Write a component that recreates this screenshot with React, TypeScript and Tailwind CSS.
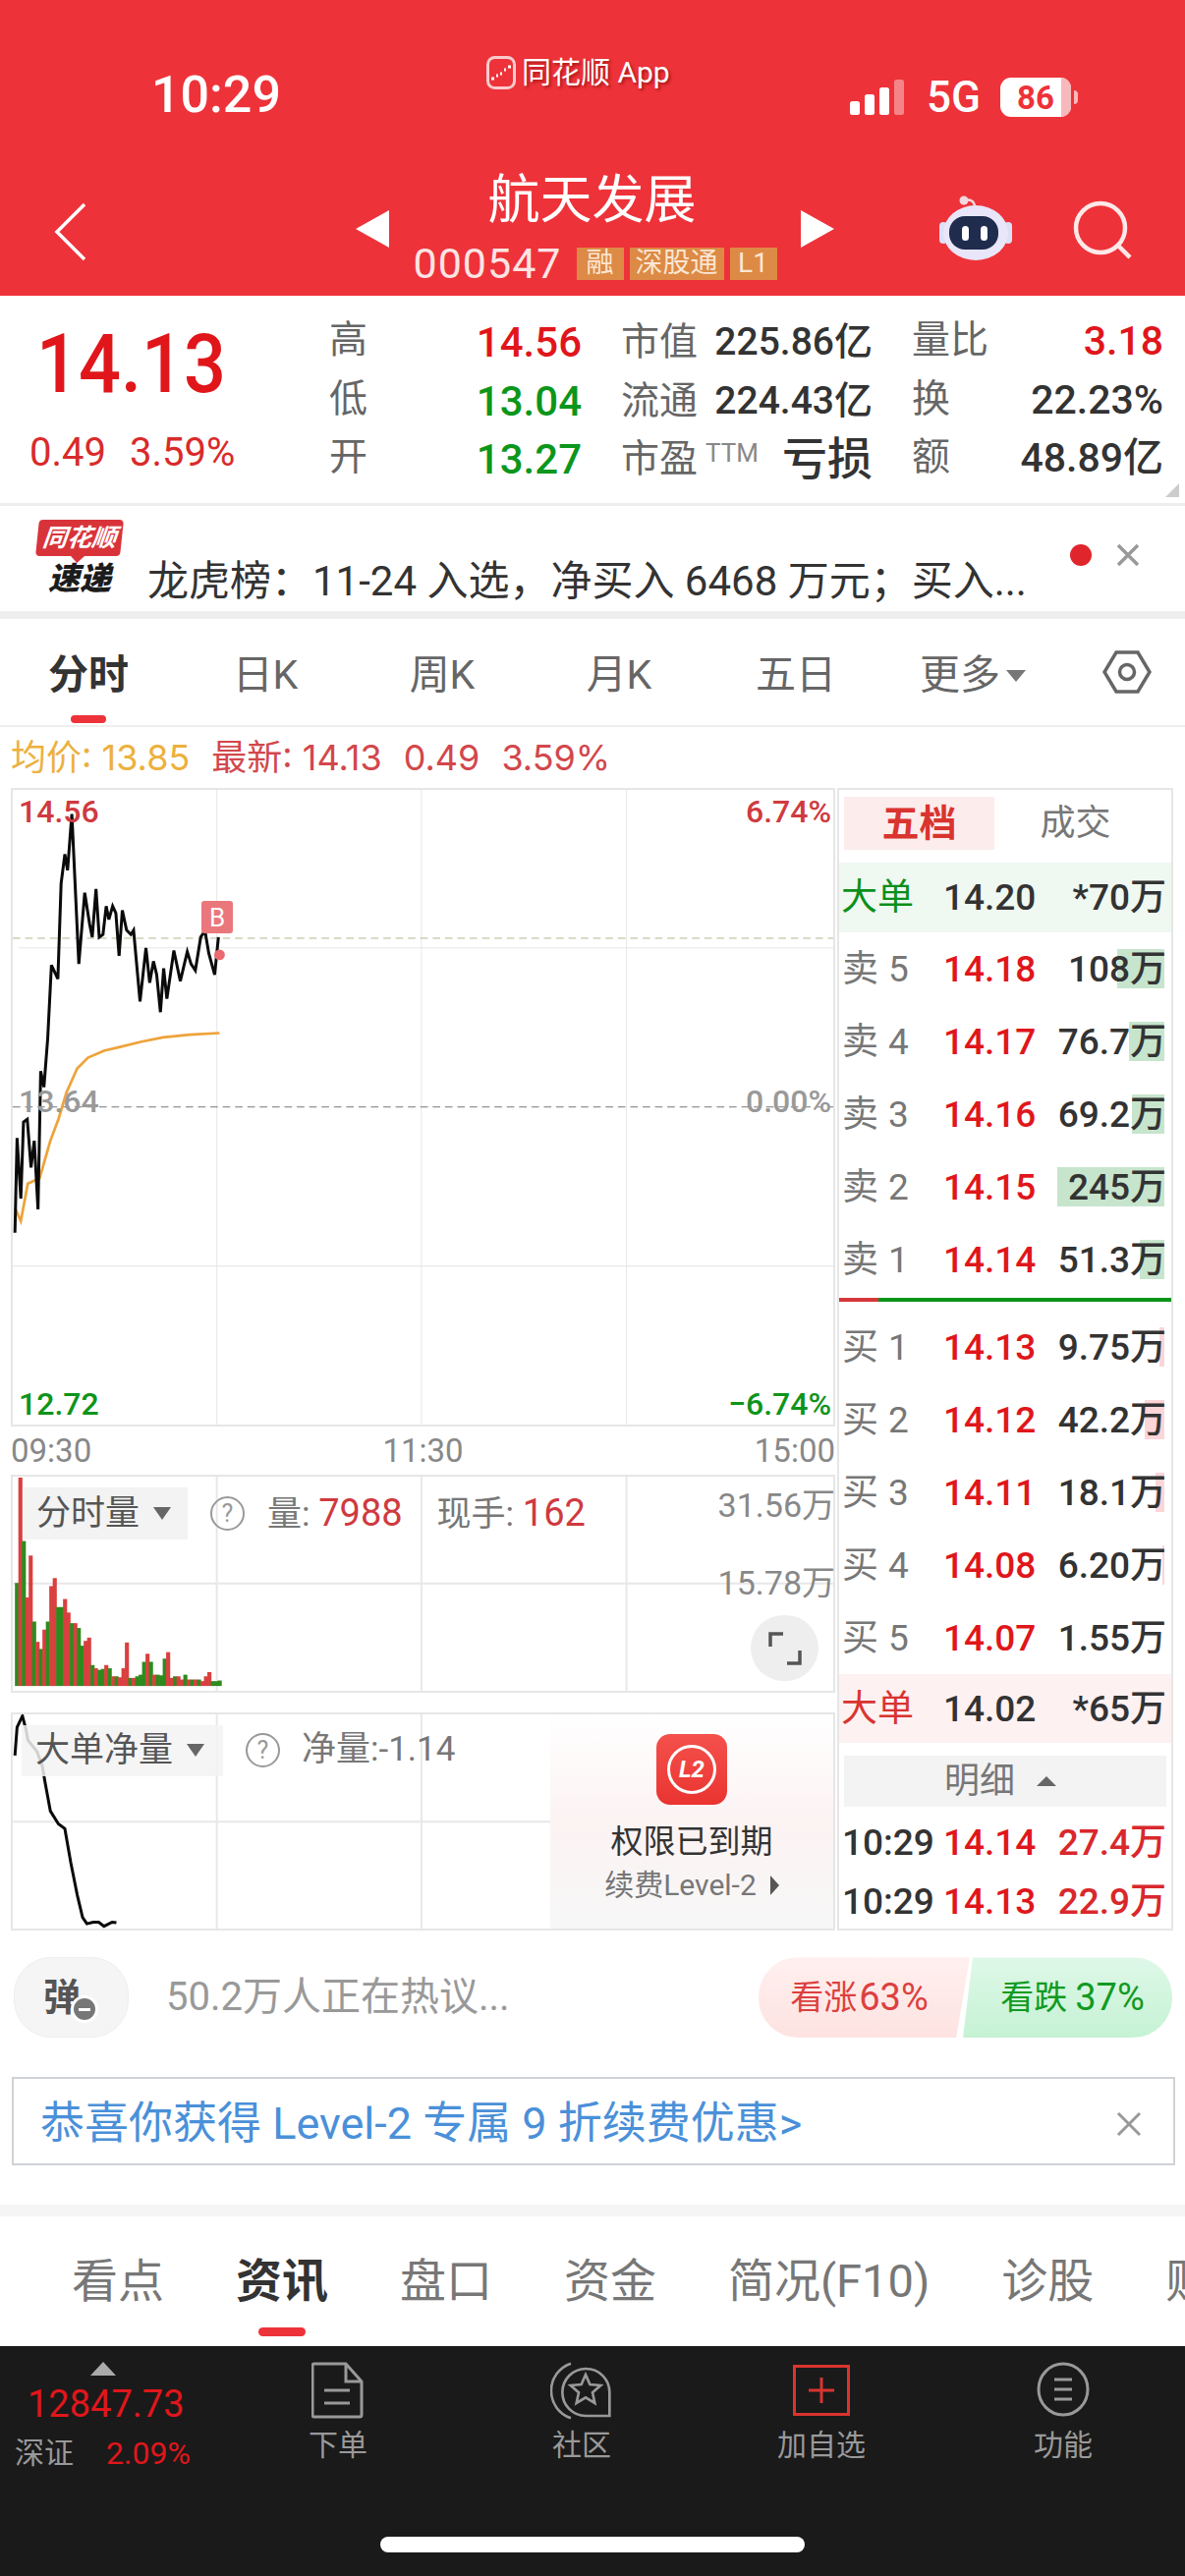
import React from "react";

const RED = "text-[#e0161b]";

// chart points are in a 1528x1185 space, the chart box scaled up
const pricePts =
  "24,1122 28,945 35,1058 40,915 47,910 54,1000 60,950 67,1078 72,820 78,850 85,760 92,622 104,648 110,470 117,415 122,445 130,340 143,620 154,487 163,545 168,570 175,480 181,570 188,565 194,512 199,537 206,512 212,525 218,605 224,520 232,557 240,565 245,557 257,690 268,590 275,655 282,615 288,640 295,710 301,628 307,685 320,595 332,652 345,597 352,620 360,632 370,570 378,558 385,600 396,640 403,570";
const avgPts =
  "24,1075 35,1100 48,1030 70,1020 90,950 105,910 120,860 140,815 160,795 190,782 220,775 260,765 300,757 350,752 405,749";
const netPts =
  "24,918 28,830 38,795 45,840 48,870 65,905 75,950 80,1000 90,1090 105,1130 117,1145 128,1250 140,1350 150,1420 158,1440 170,1435 180,1435 190,1448 205,1435 213,1437";

// [top of bar, 1 = red / 0 = green]
const volBars: [number, number][] = [
  [395, 0], [68, 1], [265, 0], [440, 1], [310, 1], [515, 0], [578, 1], [600, 0], [540, 1], [515, 0],
  [405, 1], [380, 1], [470, 0], [470, 0], [445, 1], [487, 1], [520, 0], [520, 1], [535, 0], [590, 0],
  [575, 1], [565, 1], [650, 0], [660, 1], [665, 0], [662, 0], [650, 1], [660, 0], [685, 1], [685, 0],
  [688, 1], [660, 1], [580, 1], [690, 0], [690, 1], [685, 0], [680, 0], [640, 0], [615, 1], [640, 0],
  [680, 1], [680, 0], [682, 0], [630, 0], [610, 1], [690, 1], [685, 0], [685, 1], [695, 1], [680, 0],
  [695, 1], [695, 0], [695, 1], [695, 0], [700, 1], [685, 1], [672, 1], [700, 0], [700, 0], [698, 0],
];

const quoteRows = [
  { label: "高", val: "14.56", color: RED, l2: "市值", v2: "225.86亿", l3: "量比", v3: "3.18", c3: RED },
  { label: "低", val: "13.04", color: "text-[#0b961c]", l2: "流通", v2: "224.43亿", l3: "换", v3: "22.23%", c3: "text-[#333]" },
];

const sellRows = [
  { label: "卖", n: 5, price: "14.18", vol: "108万", bar: 48 },
  { label: "卖", n: 4, price: "14.17", vol: "76.7万", bar: 36 },
  { label: "卖", n: 3, price: "14.16", vol: "69.2万", bar: 33 },
  { label: "卖", n: 2, price: "14.15", vol: "245万", bar: 109 },
  { label: "卖", n: 1, price: "14.14", vol: "51.3万", bar: 25 },
];
const buyRows = [
  { label: "买", n: 1, price: "14.13", vol: "9.75万", bar: 5 },
  { label: "买", n: 2, price: "14.12", vol: "42.2万", bar: 20 },
  { label: "买", n: 3, price: "14.11", vol: "18.1万", bar: 9 },
  { label: "买", n: 4, price: "14.08", vol: "6.20万", bar: 2 },
  { label: "买", n: 5, price: "14.07", vol: "1.55万", bar: 0 },
];

function StatusBar() {
  return (
    <div className="flex h-[190px] text-white">
      <div className="w-[495px] pl-[154px] pt-[66px] text-[52px] font-medium leading-[62px]">10:29</div>
      <div className="flex w-[370px] items-start gap-[6px] pt-[56px]">
        <svg width="30" height="34" viewBox="0 0 30 34" className="mt-[1px]">
          <rect x="1.5" y="1.5" width="27" height="31" rx="7" fill="#ee3239" stroke="#fff" strokeOpacity="0.75" strokeWidth="3" />
          <path d="M5 23h3M10 20h2M14 18h2M18 14h2M22 11h3" stroke="#fff" strokeWidth="3" />
        </svg>
        <span className="text-[30px] leading-[36px] [text-shadow:2px_2px_3px_rgba(110,0,0,0.55)]">同花顺 App</span>
      </div>
      <div className="mt-[79px] flex h-[40px] items-center">
        <svg width="60" height="36" viewBox="0 0 60 36">
          <rect x="0" y="22" width="10" height="14" rx="2.5" fill="#fff" />
          <rect x="15" y="15" width="10" height="21" rx="2.5" fill="#fff" />
          <rect x="30" y="8" width="10" height="28" rx="2.5" fill="#fff" />
          <rect x="45" y="0" width="10" height="36" rx="2.5" fill="#fff" fillOpacity="0.4" />
        </svg>
        <span className="ml-[18px] text-[44px] font-medium leading-none">5G</span>
        <div className="relative ml-[20px] flex h-[40px] w-[72px] items-center justify-center rounded-[11px] bg-white">
          <span className="text-[33px] font-bold leading-none text-[#ee3239]">86</span>
          <div className="absolute right-0 top-0 h-full w-[10px] rounded-r-[11px] bg-[#f8b9bc]" />
        </div>
        <div className="ml-[3px] h-[14px] w-[4px] rounded-r-full bg-[#f8b9bc]" />
      </div>
    </div>
  );
}

function NavBar() {
  return (
    <div className="flex h-[111px] items-start text-white">
      <div className="w-[362px] pl-[55px] pt-[16px]">
        <svg width="34" height="60" viewBox="0 0 34 60" fill="none" stroke="#fff" strokeWidth="3.5">
          <path d="M31 2 3 30l28 28" />
        </svg>
      </div>
      <div className="mt-[24px] h-0 w-0 border-y-[19px] border-r-[34px] border-y-transparent border-r-white" />
      <div className="flex w-[419px] flex-col items-center">
        <div className="-ml-[6px] -mt-[17px] text-[53px] leading-[62px]">航天发展</div>
        <div className="mt-[15px] flex h-[36px] items-center gap-[6px]">
          <span className="mr-[9px] text-[43px] leading-none tracking-[1px] text-[#fde4e4]">000547</span>
          <span className="flex h-[33px] w-[48px] items-center justify-center bg-[#dc8a45] text-[28px] text-[#fbe6d2]">融</span>
          <span className="flex h-[33px] w-[96px] items-center justify-center bg-[#dc8a45] text-[28px] text-[#fbe6d2]">深股通</span>
          <span className="flex h-[33px] w-[48px] items-center justify-center bg-[#dc8a45] text-[28px] text-[#fbe6d2]">L1</span>
        </div>
      </div>
      <div className="mt-[24px] h-0 w-0 border-y-[19px] border-l-[34px] border-y-transparent border-l-white" />
      <svg width="74" height="68" viewBox="0 0 74 68" className="ml-[107px] mt-[8px]">
        <path d="M26 6q9-2 10 6" stroke="#f3d7de" strokeWidth="2.5" fill="none" />
        <circle cx="25" cy="6" r="4.5" fill="#f3d7de" />
        <rect x="0" y="28" width="8" height="22" rx="4" fill="#dbe0f5" />
        <rect x="66" y="28" width="8" height="22" rx="4" fill="#dbe0f5" />
        <ellipse cx="37" cy="39" rx="33" ry="28" fill="#e8e6f8" />
        <rect x="10" y="22" width="50" height="34" rx="16" fill="#1f2c4d" />
        <rect x="23" y="32" width="7" height="15" rx="3.5" fill="#fff" />
        <rect x="42" y="32" width="7" height="15" rx="3.5" fill="#fff" />
      </svg>
      <svg width="60" height="60" viewBox="0 0 60 60" fill="none" stroke="#ffe8e8" strokeWidth="4.5" className="ml-[62px] mt-[14px]">
        <circle cx="28" cy="28" r="25" />
        <path d="m46 46 12 12" />
      </svg>
    </div>
  );
}

function QuotePanel() {
  return (
    <div className="relative flex h-[211px] bg-white">
      <div className="w-[335px] pl-[37px] pt-[24px]">
        <div className="origin-left scale-x-[0.9] whitespace-nowrap text-[84px] font-medium leading-[92px] text-[#e0161b]">14.13</div>
        <div className="-ml-[7px] mt-[20px] flex gap-[24px] text-[40px] leading-[48px] text-[#d92a2a]">
          <span>0.49</span>
          <span>3.59%</span>
        </div>
      </div>
      <div className="flex flex-col pt-[17px]">
        {quoteRows.map((r) => (
          <div key={r.label} className="flex h-[60px] items-center gap-[40px] text-[39px] text-[#666]">
            <div className="flex w-[257px] justify-between">
              <span>{r.label}</span>
              <span className={`text-[42px] font-medium ${r.color}`}>{r.val}</span>
            </div>
            <div className="flex w-[256px] justify-between">
              <span>{r.l2}</span>
              <span className="font-medium text-[#333]">{r.v2}</span>
            </div>
            <div className="flex w-[256px] justify-between">
              <span>{r.l3}</span>
              <span className={`text-[41px] font-medium ${r.c3}`}>{r.v3}</span>
            </div>
          </div>
        ))}
        <div className="flex h-[58px] items-center gap-[40px] text-[39px] text-[#666]">
          <div className="flex w-[257px] justify-between">
            <span>开</span>
            <span className="text-[42px] font-medium text-[#0b961c]">13.27</span>
          </div>
          <div className="flex w-[256px] items-center justify-between">
            <span>
              市盈<span className="ml-[8px] align-[10px] text-[26px] text-[#888]">TTM</span>
            </span>
            <span className="text-[46px] font-medium text-[#333]">亏损</span>
          </div>
          <div className="flex w-[256px] justify-between">
            <span>额</span>
            <span className="text-[41px] font-medium text-[#333]">48.89亿</span>
          </div>
        </div>
      </div>
      <div className="absolute bottom-[6px] right-[6px] h-0 w-0 border-b-[14px] border-l-[14px] border-b-[#ccc] border-l-transparent" />
    </div>
  );
}

function NewsTicker() {
  return (
    <div className="flex h-[118px] items-start border-y-[3px] border-b-[8px] border-y-[#eeeeee] bg-white">
      <div className="ml-[37px] mt-[14px] flex w-[88px] flex-col items-center">
        <div className="relative flex h-[37px] w-[86px] -skew-x-6 items-center justify-center rounded-[4px] bg-[#d9333a] text-[25px] font-bold italic leading-none text-white">
          同花顺
          <div className="absolute -bottom-[7px] h-0 w-0 border-x-[7px] border-t-[7px] border-x-transparent border-t-[#d9333a]" />
        </div>
        <div className="mt-[4px] text-[32px] font-black italic leading-[38px] text-[#1c1c1c]">速递</div>
      </div>
      <div className="ml-[25px] mt-[52px] w-[900px] whitespace-nowrap text-[42px] leading-[50px] text-[#333]">
        龙虎榜：11-24 入选，净买入 6468 万元；买入...
      </div>
      <div className="ml-[39px] mt-[39px] h-[22px] w-[22px] rounded-full bg-[#e0252c]" />
      <svg width="26" height="26" viewBox="0 0 26 26" className="ml-[24px] mt-[37px]" stroke="#999" strokeWidth="3.5">
        <path d="m3 3 20 20M23 3 3 23" />
      </svg>
    </div>
  );
}

function ChartTabs() {
  const tabs = ["日K", "周K", "月K", "五日"];
  return (
    <div className="flex h-[110px] items-center border-b-2 border-[#eeeeee] bg-white pt-[8px] text-[41px] text-[#666]">
      <div className="relative flex w-[180px] justify-center font-bold text-[#333]">
        分时
        <div className="absolute -bottom-[18px] h-[8px] w-[36px] rounded-full bg-[#ee3239]" />
      </div>
      {tabs.map((t) => (
        <div key={t} className="flex w-[180px] justify-center">
          {t}
        </div>
      ))}
      <div className="flex w-[180px] items-center justify-center gap-[6px]">
        更多
        <div className="h-0 w-0 border-x-[10px] border-t-[12px] border-x-transparent border-t-[#777]" />
      </div>
      <svg width="50" height="50" viewBox="0 0 50 50" fill="none" stroke="#666" strokeWidth="3.5" className="ml-[42px] -mt-[8px]">
        <path d="M14 5h22l12 20-12 20H14L2 25z" />
        <circle cx="25" cy="25" r="7.5" />
      </svg>
    </div>
  );
}

function PriceChart() {
  return (
    <div className="relative h-[650px] w-[839px] border-2 border-[#e6e6e6]">
      <svg width="835" height="646" viewBox="20 295 1528 1185" preserveAspectRatio="none" fill="none">
        <g stroke="#e8e8e8" strokeWidth="2">
          <path d="M400 295v1185M781 295v1185M1163 295v1185M30 590h1518M20 1184h1528" />
        </g>
        <path d="M20 572h1528" stroke="#b5b58f" strokeWidth="2" strokeDasharray="14 9" />
        <path d="M20 887h1528" stroke="#777" strokeWidth="2" strokeDasharray="14 9" />
        <polyline points={avgPts} stroke="#eea33a" strokeWidth="5" />
        <polyline points={pricePts} stroke="#0a0a0a" strokeWidth="5.5" />
        <circle cx="405" cy="603" r="10" fill="#ea6a6f" />
      </svg>
      <span className="absolute left-[6px] top-[3px] text-[32px] font-medium leading-[38px] text-[#cf3a40]">14.56</span>
      <span className="absolute right-[2px] top-[3px] text-[32px] font-medium leading-[38px] text-[#cf3a40]">6.74%</span>
      <span className="absolute left-[6px] top-[298px] text-[32px] font-medium leading-[38px] text-[#999]">13.64</span>
      <span className="absolute right-[2px] top-[298px] text-[32px] font-medium leading-[38px] text-[#999]">0.00%</span>
      <span className="absolute bottom-[2px] left-[6px] text-[32px] font-medium leading-[38px] text-[#0f941c]">12.72</span>
      <span className="absolute bottom-[2px] right-[2px] text-[32px] font-medium leading-[38px] text-[#0f941c]">−6.74%</span>
      <div className="absolute left-[192px] top-[113px] flex h-[33px] w-[32px] items-center justify-center rounded-[3px] bg-[#e9777b] text-[26px] leading-none text-white">
        B
      </div>
    </div>
  );
}

function Help() {
  return (
    <span className="flex h-[35px] w-[35px] items-center justify-center rounded-full border-2 border-[#999] text-[25px] leading-none text-[#999]">
      ?
    </span>
  );
}

function VolumeChart() {
  return (
    <div className="relative h-[222px] w-[839px] border-2 border-[#e6e6e6] text-[35px]">
      <svg width="835" height="218" viewBox="20 65 1528 665" preserveAspectRatio="none">
        <path d="M400 65v665M781 65v665M1163 65v665M20 397h1528" stroke="#e8e8e8" strokeWidth="2" vectorEffect="non-scaling-stroke" />
        {volBars.map(([top, up], i) => (
          <rect key={i} x={24 + i * 6.4} y={top} width="7.6" height={715 - top} fill={up ? "#d9403f" : "#2f8a1e"} />
        ))}
      </svg>
      <div className="absolute left-[11px] top-[9px] flex items-center">
        <div className="flex h-[53px] w-[167px] items-center gap-[14px] bg-[#f3f3f3] pl-[13px] leading-none text-[#555]">
          分时量
          <div className="h-0 w-0 border-x-[9px] border-t-[13px] border-x-transparent border-t-[#666]" />
        </div>
        <div className="ml-[23px]">
          <Help />
        </div>
        <span className="ml-[23px] text-[#777]">
          量: <span className="text-[38px] text-[#cf3a40]">7988</span>
        </span>
        <span className="ml-[35px] text-[#777]">
          现手: <span className="text-[38px] text-[#cf3a40]">162</span>
        </span>
      </div>
      <span className="absolute -right-[2px] top-[4px] text-[34px] text-[#888]">31.56万</span>
      <span className="absolute -right-[2px] top-[83px] text-[34px] text-[#888]">15.78万</span>
      <div className="absolute left-[751px] top-[141px] flex h-[67px] w-[69px] items-center justify-center rounded-full bg-[#eeeeee]">
        <svg width="36" height="36" viewBox="0 0 36 36" fill="none" stroke="#555" strokeWidth="3.5">
          <path d="M3 16V3h13M33 20v13H20" />
        </svg>
      </div>
    </div>
  );
}

function NetChart() {
  return (
    <div className="relative mt-[20px] h-[222px] w-[839px] border-2 border-[#e6e6e6] text-[35px]">
      <svg width="835" height="218" viewBox="20 790 1528 665" preserveAspectRatio="none" fill="none">
        <path d="M400 790v665M781 790v665M1163 790v665M20 1123h1528" stroke="#e8e8e8" strokeWidth="2" vectorEffect="non-scaling-stroke" />
        <polyline points={netPts} stroke="#0a0a0a" strokeWidth="3" vectorEffect="non-scaling-stroke" />
      </svg>
      <div className="absolute left-[9px] top-[10px] flex items-center">
        <div className="flex h-[52px] w-[205px] items-center gap-[14px] bg-[#f3f3f3]/85 pl-[14px] leading-none text-[#555]">
          大单净量
          <div className="h-0 w-0 border-x-[9px] border-t-[13px] border-x-transparent border-t-[#666]" />
        </div>
        <div className="ml-[23px]">
          <Help />
        </div>
        <span className="ml-[22px] text-[#777]">净量:-1.14</span>
      </div>
      <div className="absolute bottom-0 right-0 top-0 flex w-[288px] flex-col items-center bg-gradient-to-b from-white via-[#fcf3f3] to-[#f7f7f7] pt-[20px]">
        <div className="flex h-[72px] w-[72px] items-center justify-center rounded-[14px] bg-gradient-to-b from-[#f4504c] to-[#ea3330]">
          <div className="flex h-[50px] w-[50px] items-center justify-center rounded-full border-[3px] border-white text-[24px] font-bold italic leading-none text-white">
            L2
          </div>
        </div>
        <div className="mt-[18px] text-[33px] leading-[40px] text-[#333]">权限已到期</div>
        <div className="mt-[6px] flex items-center gap-[14px] text-[30px] leading-[36px] text-[#777]">
          续费Level-2
          <div className="h-0 w-0 border-y-[10px] border-l-[9px] border-y-transparent border-l-[#555]" />
        </div>
      </div>
    </div>
  );
}

function BookRow({ label, n, price, vol, bar, barColor }: { label: string; n: number; price: string; vol: string; bar: number; barColor: string }) {
  return (
    <div className="relative flex h-[74px] items-center pl-[3px] pr-[5px] text-[37px]">
      <span className="w-[103px] text-[#777]">
        {label}
        <span className="ml-[10px]">{n}</span>
      </span>
      <span className="font-medium text-[#e0161b]">{price}</span>
      <div className={`absolute bottom-[17px] right-[7px] top-[17px] ${barColor}`} style={{ width: bar }} />
      <span className="relative ml-auto font-medium text-[#333]">{vol}</span>
    </div>
  );
}

function OrderBook() {
  return (
    <div className="ml-[2px] h-[1163px] w-[342px] overflow-hidden border-2 border-[#e6e6e6] bg-white">
      <div className="flex h-[74px] items-start gap-[6px] pl-[5px] pt-[7px]">
        <div className="flex h-[54px] w-[153px] items-center justify-center bg-[#fdecec] text-[38px] font-bold leading-none text-[#d9342f]">五档</div>
        <div className="flex h-[54px] w-[153px] items-center justify-center text-[36px] leading-none text-[#777]">成交</div>
      </div>
      <div className="flex h-[71px] items-center bg-[#eff8f1] pl-[2px] pr-[5px] text-[37px]">
        <span className="w-[104px] text-[#0b8f1a]">大单</span>
        <span className="font-medium text-[#333]">14.20</span>
        <span className="ml-auto font-medium text-[#333]">*70万</span>
      </div>
      {sellRows.map((r) => (
        <BookRow key={r.price} {...r} barColor="bg-[#c7e5cd]" />
      ))}
      <div className="mt-[2px] flex h-[4px]">
        <div className="w-[40px] bg-[#d6373c]" />
        <div className="flex-1 bg-[#0c9418]" />
      </div>
      <div className="h-[9px]" />
      {buyRows.map((r) => (
        <BookRow key={r.price} {...r} barColor="bg-[#fbd5d8]" />
      ))}
      <div className="flex h-[70px] items-center bg-[#fdf1f2] pl-[2px] pr-[5px] text-[37px]">
        <span className="w-[104px] text-[#d9342f]">大单</span>
        <span className="font-medium text-[#333]">14.02</span>
        <span className="ml-auto font-medium text-[#333]">*65万</span>
      </div>
      <div className="mx-[5px] mt-[13px] flex h-[52px] items-center gap-[22px] bg-[#f3f3f3] pl-[102px] text-[36px] leading-none text-[#777]">
        明细
        <div className="h-0 w-0 border-x-[10px] border-b-[10px] border-x-transparent border-b-[#666]" />
      </div>
      <div className="mt-[6px] flex h-[60px] items-center pl-[3px] pr-[5px] text-[37px] font-medium">
        <span className="w-[103px] text-[#333]">10:29</span>
        <span className="text-[#e0161b]">14.14</span>
        <span className="ml-auto text-[#d9282c]">27.4万</span>
      </div>
      <div className="flex h-[60px] items-center pl-[3px] pr-[5px] text-[37px] font-medium">
        <span className="w-[103px] text-[#333]">10:29</span>
        <span className="text-[#e0161b]">14.13</span>
        <span className="ml-auto text-[#d9282c]">22.9万</span>
      </div>
    </div>
  );
}

function Discussion() {
  return (
    <div className="flex h-[82px] items-center pl-[14px] pr-[13px]">
      <div className="relative flex h-[82px] w-[117px] items-center justify-center rounded-[38px] border border-[#eeeeee] bg-[#f5f5f5] text-[38px] font-bold text-[#555]">
        <span className="-ml-[19px]">弹</span>
        <div className="absolute left-[57px] top-[38px] flex h-[28px] w-[28px] items-center justify-center rounded-full border-[3px] border-white bg-[#777]">
          <div className="h-[3px] w-[12px] bg-white" />
        </div>
      </div>
      <span className="ml-[38px] text-[40px] text-[#999]">50.2万人正在热议...</span>
      <div className="ml-auto flex">
        <div className="flex h-[82px] w-[215px] items-center justify-center gap-[2px] rounded-l-[40px] bg-gradient-to-b from-[#fff0ef] to-[#fde3e1] pr-[10px] text-[34px] text-[#dc4040] [clip-path:polygon(0_0,100%_0,93.5%_100%,0_100%)]">
          看涨<span className="text-[38px]">63%</span>
        </div>
        <div className="-ml-[7px] flex h-[82px] w-[213px] items-center justify-center gap-[8px] rounded-r-[40px] bg-gradient-to-b from-[#dff8e8] to-[#c5f2d4] pl-[10px] text-[34px] text-[#119a22] [clip-path:polygon(4.7%_0,100%_0,100%_100%,0_100%)]">
          看跌<span className="text-[38px]">37%</span>
        </div>
      </div>
    </div>
  );
}

function PromoBanner() {
  return (
    <div className="mx-[12px] mt-[40px] flex h-[90px] w-[1184px] items-center border-2 border-[#cfd2d6] pl-[27px] pr-[32px] pt-[5px]">
      <span className="text-[45px] leading-none text-[#4a90d9]">恭喜你获得 Level-2 专属 9 折续费优惠&gt;</span>
      <svg width="26" height="26" viewBox="0 0 26 26" className="ml-auto" stroke="#999" strokeWidth="3">
        <path d="m2 2 22 22M24 2 2 24" />
      </svg>
    </div>
  );
}

function ContentTabs() {
  const tabs = ["看点", "资讯", "盘口", "资金", "简况(F10)", "诊股", "财务"];
  return (
    <div className="flex h-[132px] items-start gap-[73px] overflow-hidden whitespace-nowrap bg-white pl-[73px] pt-[38px] text-[47px] leading-[56px] text-[#777]">
      {tabs.map((t) =>
        t === "资讯" ? (
          <div key={t} className="relative flex justify-center font-bold text-[#333]">
            {t}
            <div className="absolute -bottom-[28px] h-[9px] w-[48px] rounded-full bg-[#ee3239]" />
          </div>
        ) : (
          <div key={t}>{t}</div>
        )
      )}
    </div>
  );
}

function BottomBar() {
  return (
    <div className="relative flex h-[234px] bg-[#1a1a1a] text-[#999]">
      <div className="flex w-[216px] flex-col pl-[15px] pt-[16px]">
        <div className="ml-[77px] h-0 w-0 border-x-[13px] border-b-[14px] border-x-transparent border-b-[#aaa]" />
        <div className="ml-[13px] mt-[6px] text-[38px] leading-[46px] text-[#e0161b]">12847.73</div>
        <div className="mt-[8px] flex items-center gap-[33px] text-[30px] leading-[38px]">
          <span>深证</span>
          <span className="text-[32px] text-[#e0161b]">2.09%</span>
        </div>
      </div>
      {/* nav items */}
      <div className="ml-[56px] flex w-[144px] flex-col items-center pt-[16px]">
        <svg width="54" height="58" viewBox="0 0 54 58" fill="none" stroke="#999" strokeWidth="3">
          <path d="M3 2h32l16 18v34a2 2 0 0 1-2 2H3a2 2 0 0 1-2-2V4a2 2 0 0 1 2-2zM35 2v18h16M13 29h26M13 42h26" />
        </svg>
        <span className="mt-[8px] text-[30px] leading-[38px]">下单</span>
      </div>
      <div className="ml-[104px] flex w-[144px] flex-col items-center pt-[15px]">
        <svg width="65" height="60" viewBox="85 35 195 180" fill="none" stroke="#999" strokeWidth="8">
          <path d="M266 203H193A72 72 0 1 1 266 130Z" />
          <path d="M148 43A88 88 0 0 0 148 210" />
          <path d="M193 77L206 107 239 110 214 132 221 164 193 147 165 164 172 132 147 110 180 107Z" />
        </svg>
        <span className="mt-[7px] text-[30px] leading-[38px]">社区</span>
      </div>
      <div className="ml-[100px] flex w-[144px] flex-col items-center pt-[16px]">
        <svg width="58" height="52" viewBox="0 0 58 52" fill="none" stroke="#d9342f" strokeWidth="3" className="mt-[3px]">
          <rect x="1.5" y="1.5" width="55" height="49" />
          <path d="M29 13v26M16 26h26" />
        </svg>
        <span className="mt-[11px] text-[30px] leading-[38px]">加自选</span>
      </div>
      <div className="ml-[102px] flex w-[144px] flex-col items-center pt-[16px]">
        <svg width="54" height="56" viewBox="0 0 54 56" fill="none" stroke="#999" strokeWidth="3">
          <ellipse cx="27" cy="28" rx="25" ry="26" />
          <path d="M18 18h18M18 28h18M18 38h18" />
        </svg>
        <span className="mt-[10px] text-[30px] leading-[38px]">功能</span>
      </div>
      <div className="absolute bottom-[24px] left-[387px] h-[16px] w-[432px] rounded-full bg-white" />
    </div>
  );
}

export default function App() {
  return (
    <div className="flex h-[2622px] w-[1206px] flex-col overflow-hidden bg-white [font-family:Roboto,'Noto_Sans_CJK_SC',sans-serif]">
      <div className="h-[301px] bg-[#ee3239]">
        <StatusBar />
        <NavBar />
      </div>
      <QuotePanel />
      <NewsTicker />
      <ChartTabs />
      <div className="flex h-[63px] items-center gap-[22px] pl-[11px] [font-family:Inter,'Noto_Sans_CJK_SC',sans-serif] text-[36px] text-[#d2474c]">
        <span className="text-[#ecb13d]">均价: 13.85</span>
        <span>最新: 14.13</span>
        <span>0.49</span>
        <span>3.59%</span>
      </div>
      <div className="flex">
        <div className="ml-[11px] flex w-[839px] flex-col">
          <PriceChart />
          <div className="flex h-[49px] items-center justify-between text-[33px] text-[#888]">
            <span>09:30</span>
            <span>11:30</span>
            <span>15:00</span>
          </div>
          <VolumeChart />
          <NetChart />
        </div>
        <OrderBook />
      </div>
      <div className="h-[27px]" />
      <Discussion />
      <PromoBanner />
      <div className="mt-[40px] h-[12px] bg-[#f5f5f5]" />
      <ContentTabs />
      <BottomBar />
    </div>
  );
}
